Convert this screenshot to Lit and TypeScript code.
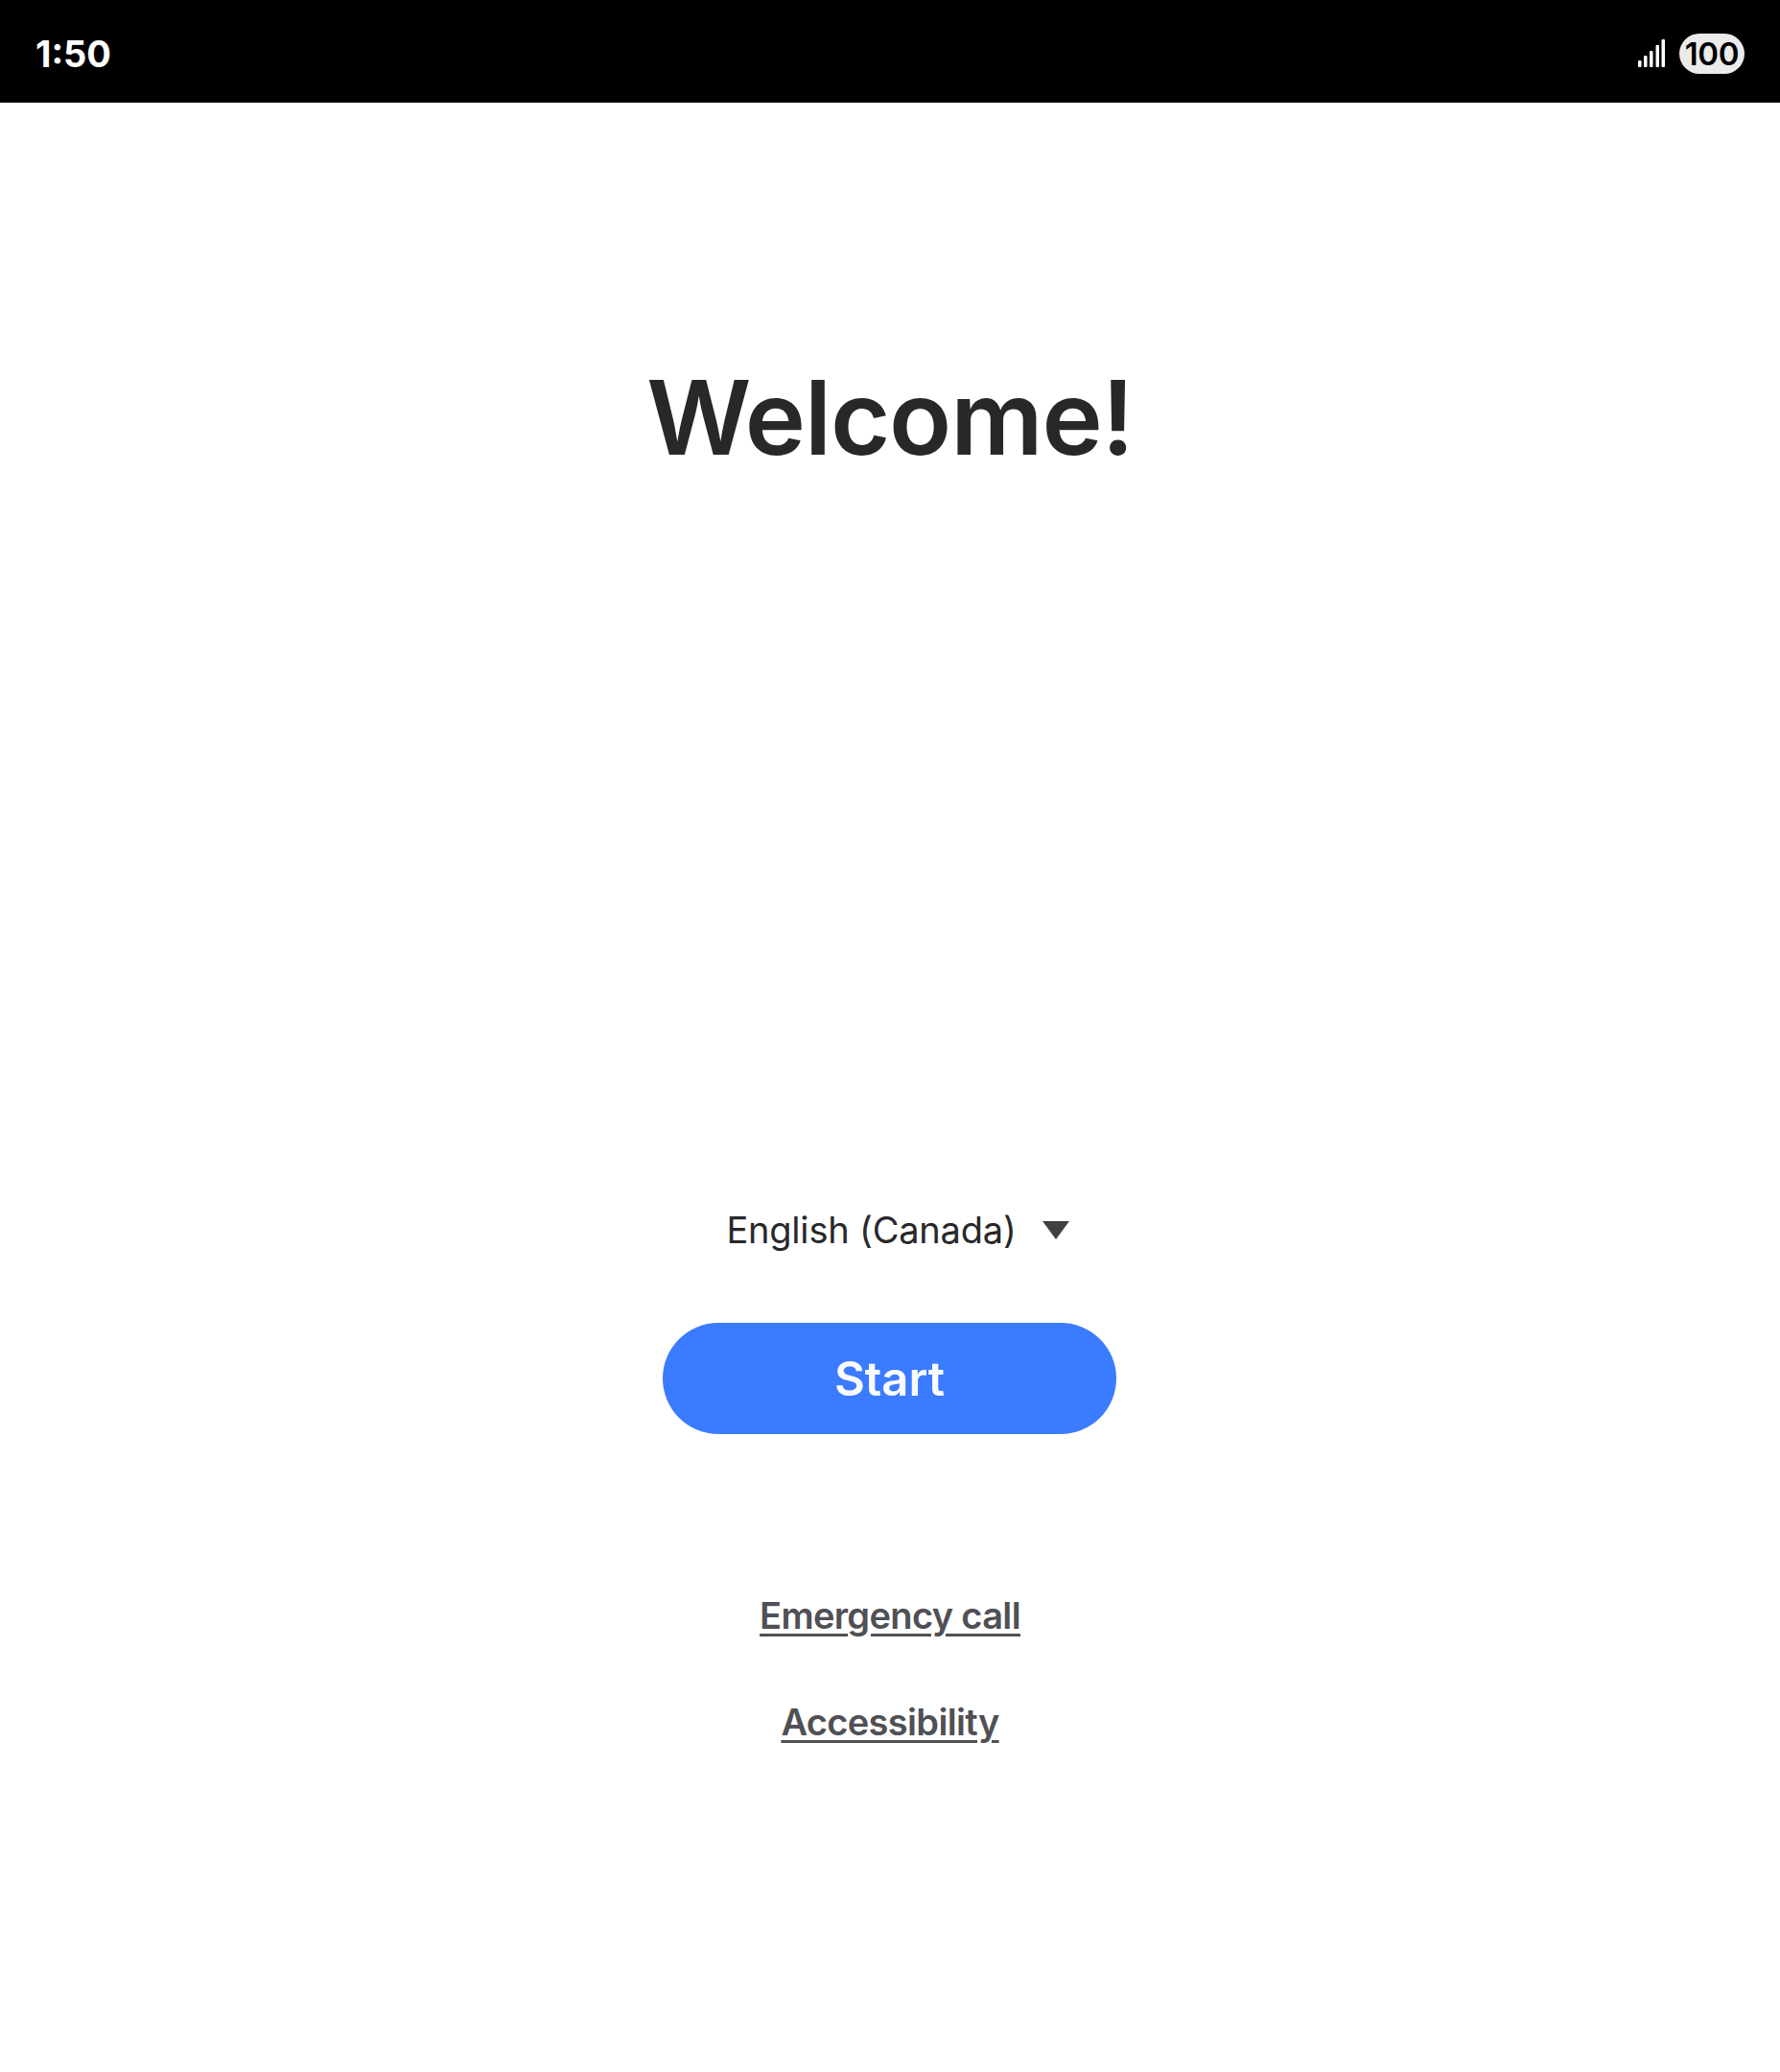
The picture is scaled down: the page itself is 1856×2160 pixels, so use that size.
import { LitElement, html, css } from "lit";
import { customElement } from "lit/decorators.js";

@customElement("app-root")
export class AppRoot extends LitElement {
  static styles = css`
    :host { display: block; width: 1856px; height: 2160px; background: #fff; font-family: Inter, "Noto Sans", sans-serif; }
    .status { height: 107px; background: #000; display: flex; align-items: center; justify-content: space-between; padding: 5px 37px 0 37px; box-sizing: border-box; }
    .time { color: #fff; font-size: 38px; font-weight: 700; line-height: 1; }
    .right { display: flex; align-items: center; gap: 15px; }
    .signal { display: block; }
    .battery { width: 68px; height: 42px; border-radius: 21px; background: #ebebeb; color: #000; font-size: 33px; font-weight: 600; display: flex; align-items: center; justify-content: center; line-height: 1; letter-spacing: -0.3px; }
    .main { display: flex; flex-direction: column; align-items: center; }
    h1 { margin: 263px 0 0; font-size: 107px; line-height: 130px; font-weight: 600; color: #28282a; letter-spacing: -1.1px; }
    .lang { margin-top: 758px; display: flex; align-items: center; gap: 27px; font-size: 38px; line-height: 48px; color: #28282a; letter-spacing: -0.2px; margin-left: 16px; }
    .tri { display: block; }
    .start { margin-top: 73px; margin-right: 1px; width: 473px; height: 116px; border: none; border-radius: 58px; background: #3a7bff; color: #fafaff; font: 600 49px/1 Inter, sans-serif; display: flex; align-items: center; justify-content: center; padding: 0; }
    .link { color: #505055; font-size: 38px; font-weight: 600; line-height: 46px; letter-spacing: -0.65px; text-decoration: underline; text-decoration-thickness: 3px; text-underline-offset: 5px; }
    .link.first { margin-top: 166px; }
    .link.second { margin-top: 65px; }
  `;

  render() {
    return html`
      <div class="status">
        <span class="time">1:50</span>
        <div class="right">
          <svg class="signal" width="28" height="30" viewBox="0 0 28 30">
            <g fill="#fff">
              <rect x="0" y="22" width="3.5" height="7" rx="1.2"></rect>
              <rect x="6" y="17" width="3.5" height="12" rx="1"></rect>
              <rect x="12" y="12" width="3.5" height="17" rx="1"></rect>
              <rect x="18.5" y="6" width="3.5" height="23" rx="1"></rect>
              <rect x="24.5" y="0" width="3.5" height="29" rx="1"></rect>
            </g>
          </svg>
          <div class="battery">100</div>
        </div>
      </div>
      <div class="main">
        <h1>Welcome!</h1>
        <div class="lang">
          <span>English (Canada)</span>
          <svg class="tri" width="28" height="19" viewBox="0 0 28 19"><path d="M0 0H28L14 19Z" fill="#404040"></path></svg>
        </div>
        <button class="start">Start</button>
        <a class="link first">Emergency call</a>
        <a class="link second">Accessibility</a>
      </div>
    `;
  }
}
